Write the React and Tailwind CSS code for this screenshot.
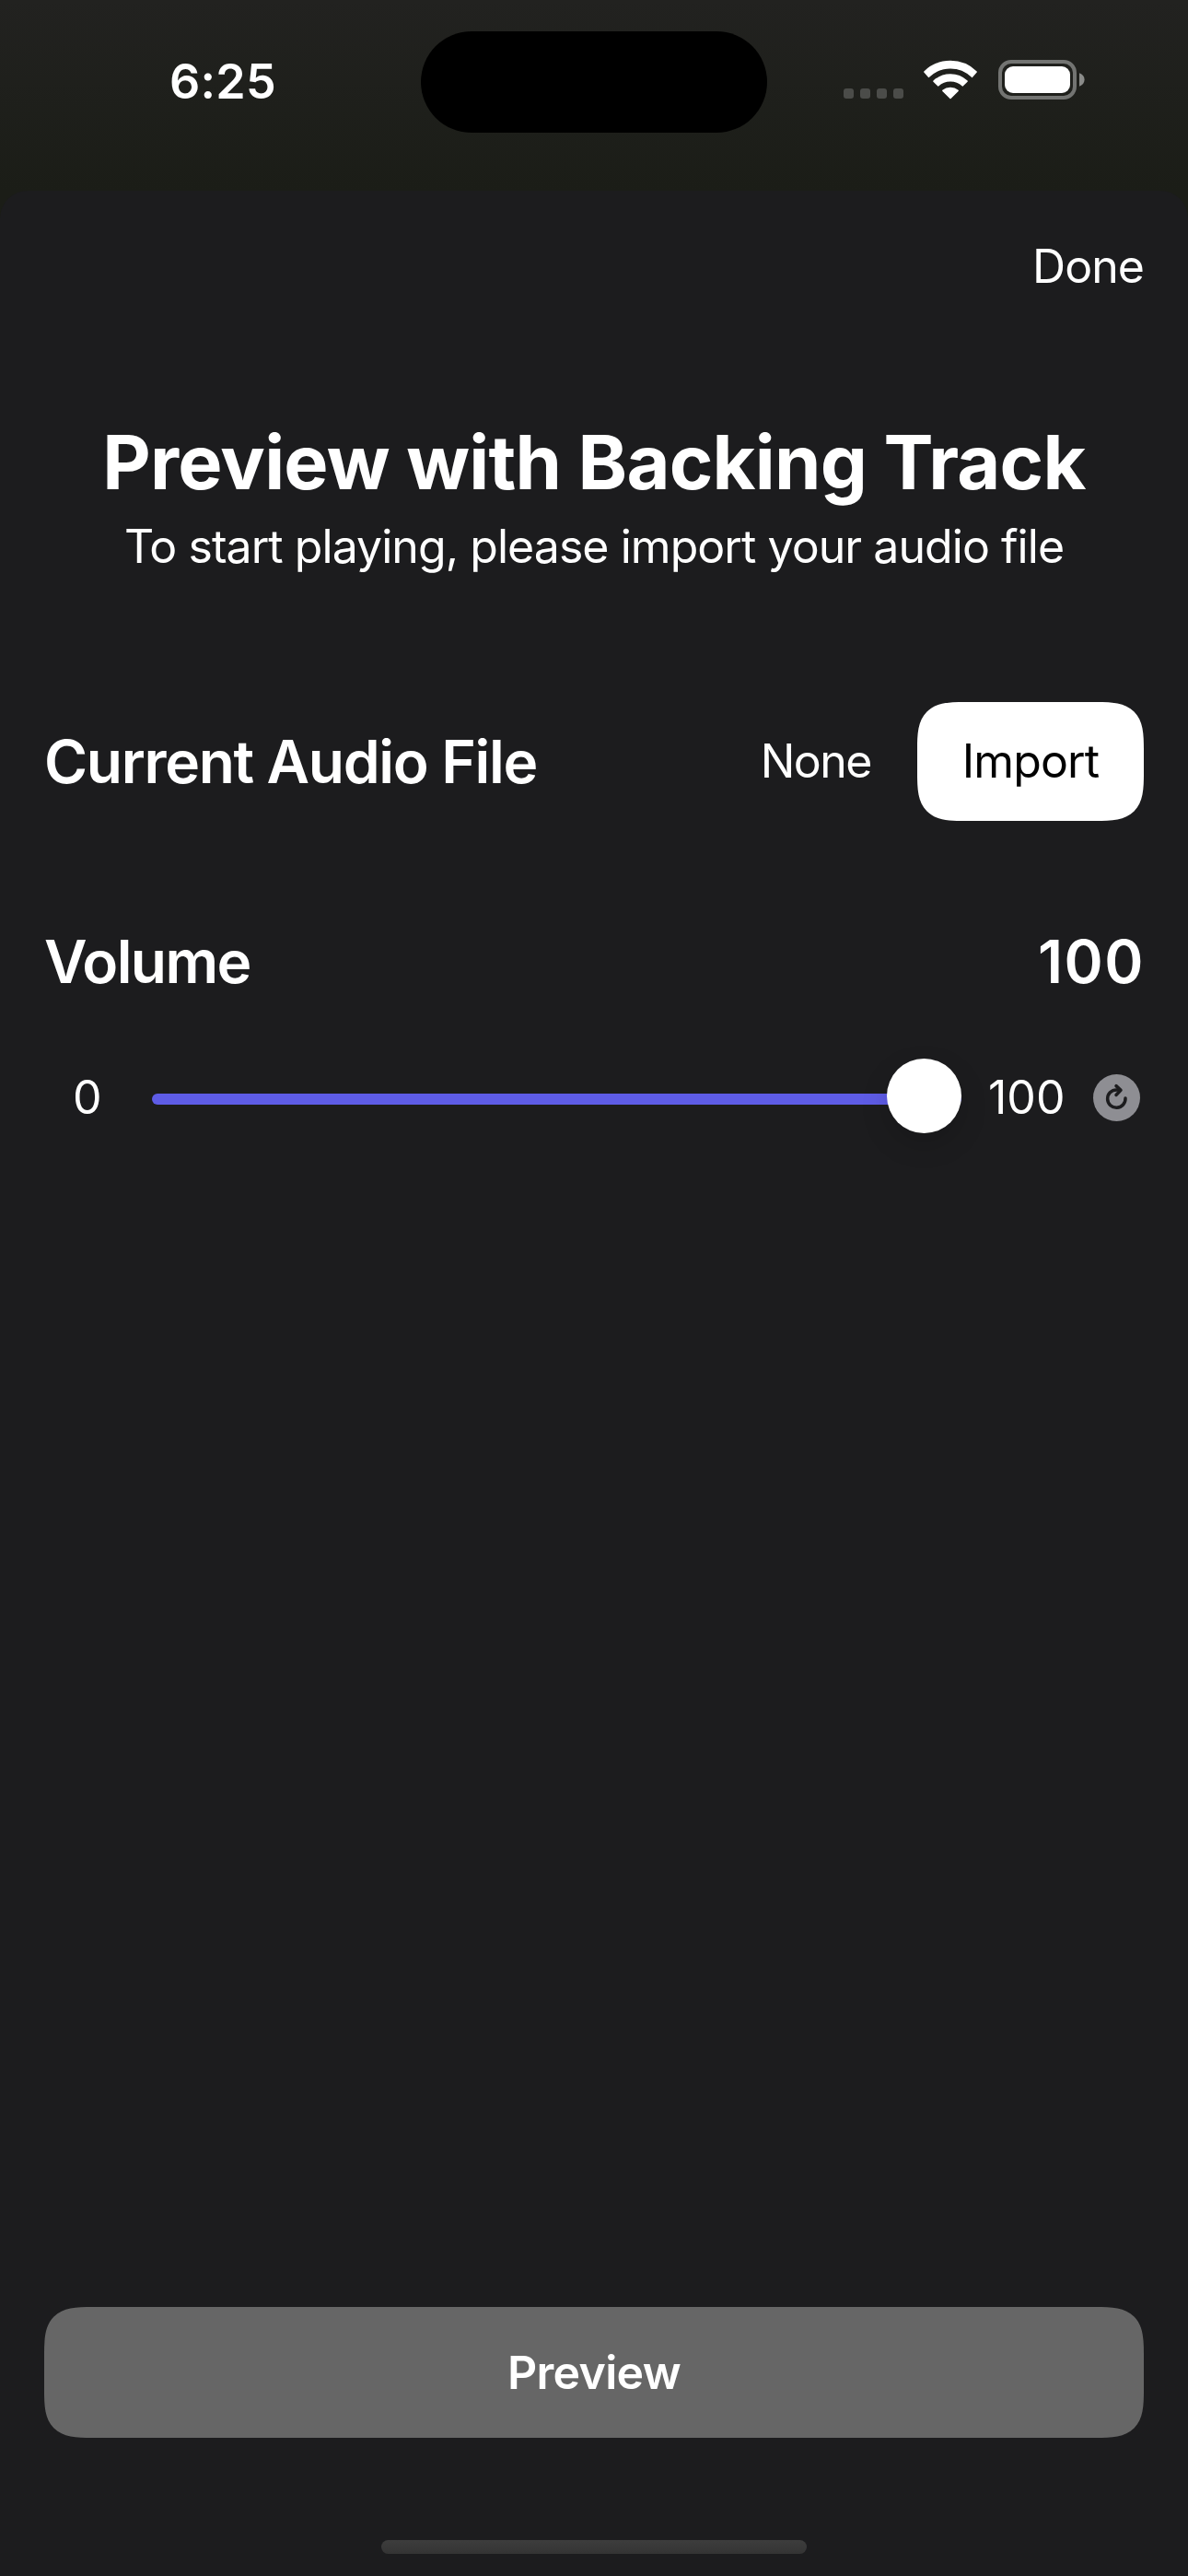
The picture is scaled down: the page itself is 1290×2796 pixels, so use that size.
function SignalDots() {
  return (
    <div className="mb-px flex gap-[7px]">
      {[0, 1, 2, 3].map((dot) => (
        <span key={dot} className="size-[11px] rounded-[3px] bg-[#4b4c49]" />
      ))}
    </div>
  );
}

function WifiIcon() {
  return (
    <svg className="h-[43px] w-[58px]" viewBox="0 0 58 43" fill="#fff" stroke="#fff" strokeWidth="1.6" strokeLinejoin="round">
      <path d="M.9 13A40.3 40.3 0 0 1 57.1 13L52.5 18.3A33.5 33.5 0 0 0 5.5 18.3Z" />
      <path d="M11 23.2A26.3 26.3 0 0 1 47 23.2L42.4 27.8A19.8 19.8 0 0 0 15.6 27.8Z" />
      <path d="M20.9 33.4A12.6 12.6 0 0 1 37.1 33.4L29 41.4Z" />
    </svg>
  );
}

function BatteryIcon() {
  return (
    <div className="flex items-center gap-[3px]">
      <div className="h-[43px] w-[85px] rounded-[14px] border-4 border-[#737472] p-[3px]">
        <div className="h-full rounded-[9px] bg-white" />
      </div>
      <svg className="h-[15px] w-[6px]" viewBox="0 0 6 15" fill="#8b8c8a">
        <path d="M0 .3C3.4 1.5 5.6 4.2 5.6 7.5S3.4 13.5 0 14.7Z" />
      </svg>
    </div>
  );
}

function StatusBar() {
  return (
    <header className="flex h-[207px] items-start bg-linear-to-b from-[#222220] to-[#1b1d17]">
      <div className="flex w-[457px] pt-[59px] pl-[184px]">
        <span className="text-[52px] leading-[60px] font-semibold tracking-[0.25px]">6:25</span>
      </div>
      <div className="mt-[34px] h-[110px] w-[376px] rounded-full bg-black" />
      <div className="flex items-end pt-[65px] pl-[83px]">
        <SignalDots />
        <div className="ml-[22px]">
          <WifiIcon />
        </div>
        <div className="ml-[23px]">
          <BatteryIcon />
        </div>
      </div>
    </header>
  );
}

function ResetButton() {
  return (
    <button className="mt-[4px] ml-auto size-[51px] rounded-full bg-[#8e8e93]" aria-label="Reset volume">
      <svg className="size-[51px]" viewBox="0 0 51 51" fill="none" stroke="#1c1c1e" strokeWidth="3.5" strokeLinecap="round" strokeLinejoin="round">
        <path d="M35 25.9A9.7 9.7 0 1 1 25.3 16.9L28.5 17" />
        <path d="M25 12.6L30 17.3L25 22.4" />
      </svg>
    </button>
  );
}

function VolumeSlider() {
  return (
    <div className="mt-[65px] flex h-[81px] items-center pr-1 text-[50px] leading-[60px]">
      <span className="w-[117px] pt-[3px] pl-[31px]">0</span>
      <div className="relative mt-[7px] h-3 w-[879px] rounded-full bg-[#5e5ce6]">
        <div className="absolute -top-[38px] right-0 size-[81px] rounded-full bg-white shadow-[0_12px_30px_rgba(0,0,0,0.15)]" />
      </div>
      <span className="pt-[3px] pl-[29px]">100</span>
      <ResetButton />
    </div>
  );
}

export default function App() {
  return (
    <div className="flex h-[2796px] w-[1290px] flex-col overflow-hidden bg-[#1b1d17] font-['Inter',sans-serif] text-white">
      <StatusBar />
      <main className="flex flex-1 flex-col rounded-t-[30px] bg-[#1c1c1e] px-12">
        <div className="flex h-[165px] items-center justify-end pb-[2px]">
          <button className="text-[50px] leading-[60px] tracking-[-0.97px]">Done</button>
        </div>

        <div className="mt-[82px] text-center">
          <h1 className="text-[81px] leading-[96px] font-bold tracking-[-0.77px]">Preview with Backing Track</h1>
          <p className="mt-[11px] text-[50px] leading-[64px] tracking-[-0.95px]">To start playing, please import your audio file</p>
        </div>

        <div className="mt-[137px] flex h-[129px] items-center">
          <h2 className="text-[64px] leading-[80px] font-semibold tracking-[-1.31px]">Current Audio File</h2>
          <span className="mr-[50px] ml-auto pb-[2px] text-[50px] leading-[60px] tracking-[-1.5px]">None</span>
          <button className="h-[129px] w-[246px] rounded-[52px] bg-white pb-[2px] text-[50px] leading-[60px] tracking-[-0.89px] text-black [corner-shape:superellipse(1.62)]">
            Import
          </button>
        </div>

        <div className="mt-[113px] flex h-[80px] items-center justify-between text-[64px] leading-[80px] font-semibold">
          <h2 className="tracking-[-1.6px]">Volume</h2>
          <span className="-mr-[1px] tracking-[1.5px]">100</span>
        </div>

        <VolumeSlider />

        <button className="mt-auto h-[142px] w-full rounded-[52px] bg-[#666666] text-[50px] leading-[60px] font-semibold tracking-[-0.7px] [corner-shape:superellipse(1.62)]">
          Preview
        </button>
        <div className="mt-[111px] mb-6 h-[15px] w-[462px] self-center rounded-full bg-linear-to-b from-[#3d3d3d] to-[#343434]" />
      </main>
    </div>
  );
}
